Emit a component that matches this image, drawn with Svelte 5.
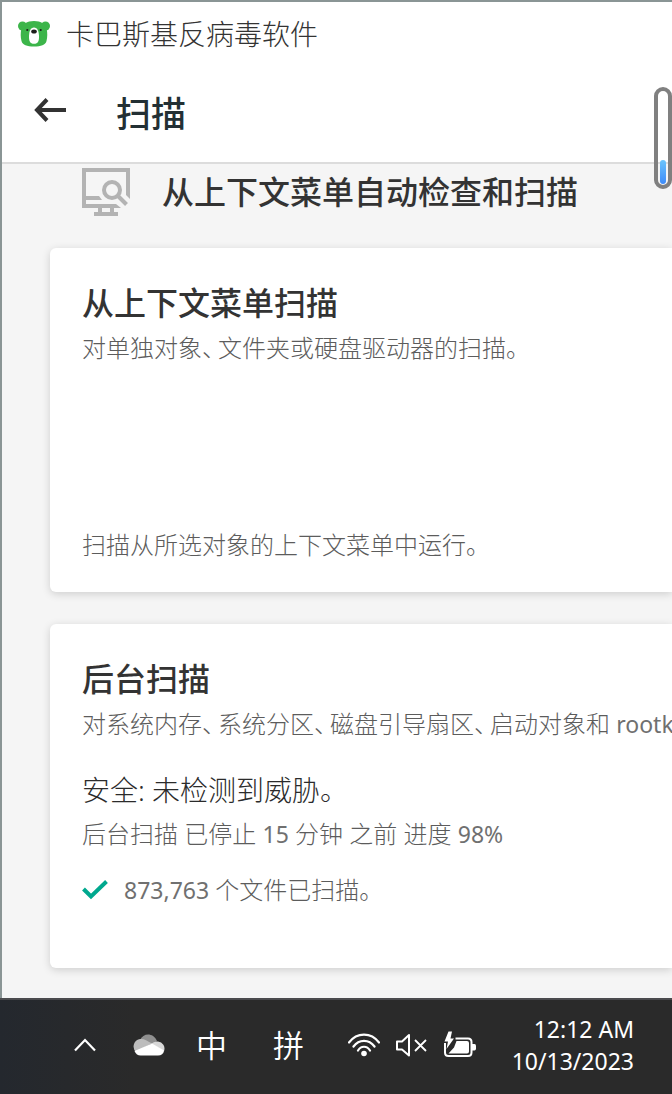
<!-- Antivirus scan page with the system taskbar below it. -->

<script lang="ts">
  const appName = "卡巴斯基反病毒软件";
  const areas = ["对系统内存", "系统分区", "磁盘引导扇区", "启动对象和"];
  const filesScanned = 873763;
  const progress = 98;
  const minutesAgo = 15;
</script>

<div class="screen">
  <div class="window">
    <header class="titlebar">
      <svg width="32" height="26" viewBox="0 0 32 26" aria-hidden="true">
        <g fill="#3cb54a">
          <circle cx="4.5" cy="5" r="4.5" />
          <circle cx="27.5" cy="5" r="4.5" />
          <path d="M16 0C9 0 4 3 3.300 8C2.500 12 2.500 16 3.500 20C4.500 24 9 25.500 16 25.500S27.500 24 28.500 20C29.500 16 29.500 12 28.700 8C28 3 23 0 16 0Z" />
        </g>
        <path d="M16 6.500C12.500 6.500 11.300 10 11 15C10.800 20 12 22.800 16 22.800S21.200 20 21 15C20.700 10 19.500 6.500 16 6.500Z" fill="#fff" />
        <ellipse cx="16" cy="10.500" rx="2.800" ry="2" fill="#1d1d1b" />
        <circle cx="9.300" cy="9" r="1.100" fill="#1d1d1b" />
        <circle cx="22.700" cy="9" r="1.100" fill="#1d1d1b" />
      </svg>
      <span>{appName}</span>
    </header>

    <div class="pagehead">
      <button class="back" aria-label="返回">
        <svg width="32" height="24" viewBox="0 0 32 24" fill="none" stroke="#333" stroke-width="4">
          <path d="M3 12H32M13 1.500L3 12L13 22.500" />
        </svg>
      </button>
      <h1>扫描</h1>
    </div>

    <main>
      <div class="section">
        <svg width="48" height="48" viewBox="0 0 48 48" aria-hidden="true">
          <g fill="#b3b3b3">
            <path d="M0 0H48V31L44 27V4H4V28H17L20 32H4V36H34L39 40H0Z" />
            <path d="M16 40H20V44H28V40H32V44H36V48H12V44H16Z" />
          </g>
          <g fill="none" stroke="#b3b3b3" stroke-width="4">
            <circle cx="30" cy="22" r="8" />
            <path d="M35.500 27.500L44.500 36.500" />
          </g>
        </svg>
        <h2>从上下文菜单自动检查和扫描</h2>
      </div>

      <section class="card">
        <h3>从上下文菜单扫描</h3>
        <p>对单独对象<span class="pause">、</span>文件夹或硬盘驱动器的扫描。</p>
        <p class="note">扫描从所选对象的上下文菜单中运行。</p>
      </section>

      <section class="card">
        <h3>后台扫描</h3>
        <p>{#each areas as area, i}{#if i > 0}<span class="pause">、</span>{/if}{area}{/each} <span class="latin">rootk</span></p>
        <p class="status">安全: 未检测到威胁。</p>
        <p>后台扫描 已停止 <span class="latin">{minutesAgo}</span> 分钟 之前 进度 <span class="latin">{progress}%</span></p>
        <div class="result">
          <svg width="26" height="20" viewBox="0 0 26 20" fill="none" stroke="#00a88e" stroke-width="4" aria-hidden="true">
            <path d="M1.500 9L9 16.500L24.500 1.500" />
          </svg>
          <p><span class="latin">{filesScanned.toLocaleString("en-US")}</span> 个文件已扫描。</p>
        </div>
      </section>
    </main>

    <div class="scroller"><div class="fill"></div></div>
  </div>

  <footer class="taskbar">
    <button aria-label="显示隐藏的图标">
      <svg width="22" height="14" viewBox="0 0 22 14" fill="none" stroke="#fff" stroke-width="2.200">
        <path d="M1 12.500L11 2L21 12.500" />
      </svg>
    </button>
    <button class="cloud" aria-label="OneDrive">
      <svg width="32" height="22" viewBox="0 0 32 22">
        <path d="M7 6C10-1 20-2 24 7L20 11L12 8Z" fill="#8f8f8f" />
        <path d="M3 18A7.500 7.500 0 0 1 6 5.300C10 4 13 6 19 9.500L3 18Z" fill="#bdbdbd" />
        <path d="M18 10Q21 7 25 7.500A7 7 0 0 1 31 17L18 10Z" fill="#d8d8d8" />
        <path d="M1.500 17L19 9.500L31.200 16.500Q30 21.500 25 21.500H7.500Q3.500 21.500 1.500 17Z" fill="#fff" />
      </svg>
    </button>
    <button class="ime">中</button>
    <button class="ime mode">拼</button>
    <button class="tray" aria-label="网络、音量、电池">
      <svg width="32" height="24" viewBox="0 0 32 24" fill="none" stroke="#fff" stroke-width="2.200">
        <path d="M1 9.500C9-1 23-1 31 9.500M5.500 13.500C11 6 21 6 26.500 13.500M10 17.500C13 12.500 19 12.500 22 17.500" stroke-linecap="round" />
        <circle cx="16" cy="20.500" r="2.800" fill="#fff" stroke="none" />
      </svg>
      <svg width="32" height="24" viewBox="0 0 32 24" fill="none" stroke="#fff" stroke-width="2">
        <path d="M1 8.500H6L13 2V22.500L6 16.500H1Z" stroke-linejoin="round" />
        <path d="M19 7L30 18M30 7L19 18" stroke-width="1.800" />
      </svg>
      <svg width="32" height="28" viewBox="0 0 32 28">
        <path d="M11.500 7.500H24Q27.500 7.500 27.500 11V21.500Q27.500 25 24 25H4.500Q1 25 1 21.500V12" fill="none" stroke="#fff" stroke-width="2" />
        <path d="M12.500 10H23Q25 10 25 12V20.500Q25 22.500 23 22.500H4.500L10 16.500Z" fill="#fff" />
        <path d="M28 13H30.500Q32 13 32 15V17.500Q32 19.500 30.500 19.500H28Z" fill="#fff" />
        <path d="M4.500 0.500L0.500 10.500H4L2.500 18L10 7.500H6.500L8 0.500Z" fill="#fff" />
      </svg>
    </button>
    <button class="clock">
      <span>12:12 AM</span>
      <span>10/13/2023</span>
    </button>
  </footer>
</div>

<style>
  :global(body) {
    margin: 0;
    background: #2a2a2a;
  }

  .screen {
    display: flex;
    flex-direction: column;
    min-height: 100vh;
    overflow: hidden;
    font-family: "Noto Sans", "Noto Sans CJK SC", sans-serif;
    color: #333;
  }

  .window {
    position: relative;
    flex: 1;
    display: flex;
    flex-direction: column;
    border-top: 2px solid #8a9595;
    border-left: 2px solid #8a9595;
    background: #fff;
  }

  .titlebar {
    display: flex;
    align-items: center;
    gap: 16px;
    height: 64px;
    padding-left: 16px;
    font-size: 28px;
    line-height: 36px;
    font-weight: 300;
    white-space: nowrap;
  }

  .pagehead {
    display: flex;
    align-items: center;
    gap: 50px;
    height: 96px;
    padding-left: 32px;
    border-bottom: 2px solid #dcdcdc;
  }

  button {
    padding: 0;
    border: none;
    background: none;
    color: inherit;
    font: inherit;
    cursor: pointer;
  }

  svg {
    display: block;
    flex: none;
  }

  .back {
    margin-bottom: 8px;
  }

  h1,
  h2,
  h3,
  p {
    margin: 0;
    white-space: nowrap;
  }

  h1 {
    font-size: 35px;
    line-height: 48px;
    font-weight: 500;
    color: #233034;
  }

  h2,
  h3 {
    font-size: 32px;
    line-height: 46px;
    font-weight: 500;
  }

  main {
    flex: 1;
    padding: 0 0 30px 48px;
    background: #f5f5f5;
    overflow: hidden;
  }

  .section {
    display: flex;
    align-items: center;
    gap: 32px;
    height: 56px;
    padding: 0 0 28px 32px;
  }

  .card {
    box-sizing: border-box;
    min-height: 344px;
    padding: 32px 0 24px 32px;
    border-radius: 6px 0 0 6px;
    background: #fff;
    box-shadow: 0 2px 8px rgba(0, 0, 0, 0.16);
  }

  .card + .card {
    margin-top: 32px;
  }

  p {
    font-size: 24px;
    line-height: 44px;
    font-weight: 300;
    font-feature-settings: "halt";
    color: #5c5c5c;
  }

  .pause {
    margin-right: 4px;
  }

  .latin {
    font-size: 23px;
    font-weight: 400;
    color: #707070;
  }

  .note {
    margin-top: 153px;
  }

  .status {
    margin-top: 22px;
    font-size: 28px;
    color: #2b2b2b;
  }

  .result {
    display: flex;
    align-items: center;
    gap: 16px;
    margin-top: 12px;
  }

  .scroller {
    position: absolute;
    top: 85px;
    right: 0;
    box-sizing: border-box;
    display: flex;
    align-items: flex-end;
    width: 18px;
    height: 102px;
    padding: 0 2px 1px;
    border: 4px solid #808080;
    border-radius: 9px;
  }

  .fill {
    width: 100%;
    height: 24px;
    border-radius: 3px;
    background: linear-gradient(#6cc4fa, #3d8bfa);
  }

  .taskbar {
    box-sizing: border-box;
    display: flex;
    align-items: center;
    height: 96px;
    padding: 0 38px 4px 74px;
    border-top: 2px solid #4b4b4e;
    background: linear-gradient(90deg, #24282e, #2a2a2a 20%);
    color: #fff;
  }

  .cloud {
    margin-left: 37px;
  }

  .ime {
    margin-left: 31px;
    font-size: 31px;
    line-height: 40px;
    font-weight: 350;
  }

  .mode {
    margin-left: 46px;
  }

  .tray {
    display: flex;
    align-items: center;
    gap: 16px;
    margin-left: 44px;
  }

  .clock {
    display: flex;
    flex-direction: column;
    align-items: flex-end;
    margin-left: auto;
    font-size: 23px;
    line-height: 32px;
  }
</style>
